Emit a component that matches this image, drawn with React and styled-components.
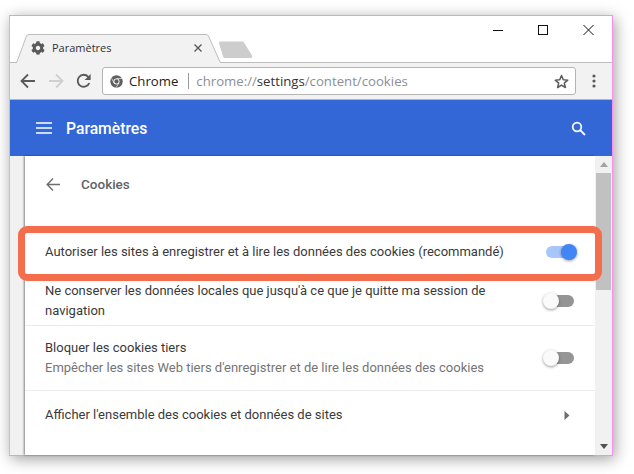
import styled, { createGlobalStyle } from 'styled-components'
import { FaCog } from 'react-icons/fa'

const GlobalStyle = createGlobalStyle`
  html, body {
    margin: 0;
    padding: 0;
    background: #fff;
    overflow: hidden;
  }
`

const Page = styled.div`
  width: 634px;
  height: 474px;
  box-sizing: border-box;
  padding: 15px 0 0 9px;
`

const Win = styled.div`
  position: relative;
  width: 604px;
  height: 441px;
  box-sizing: border-box;
  border: 1px solid #fb8cf0;
  border-left-color: #f4a0ee;
  background: #fff;
  display: flex;
  flex-direction: column;
  box-shadow: 2px 3px 14px rgba(0, 0, 0, 0.38);
  font-family: Roboto, sans-serif;
`

const TitleBar = styled.div`
  height: 47px;
  flex: none;
  display: flex;
  justify-content: space-between;
  box-sizing: border-box;
  border-bottom: 1px solid #bdbdbd;
`

const TabStrip = styled.div`
  display: flex;
  align-items: flex-start;
  padding: 18px 0 0 6px;
`

const Tab = styled.div`
  position: relative;
  width: 204px;
  height: 29px;
  display: flex;
  align-items: center;
  box-sizing: border-box;
  padding: 0 0 2px 15px;
  font-family: 'Open Sans', sans-serif;
  font-size: 11px;
  color: #333;
  z-index: 1;
`

const TabShape = styled.svg`
  position: absolute;
  left: 0;
  top: 0;
  z-index: -1;
`

const TabLabel = styled.span`
  margin-left: 7px;
  flex: 1;
`

const TabClose = styled.svg`
  margin-right: 18px;
`

const NewTab = styled.svg`
  margin: 7px 0 0 -2px;
`

const WinControls = styled.div`
  display: flex;
  align-items: flex-start;
  padding-top: 7px;
  padding-right: 18px;
  gap: 35px;
`

const ToolBar = styled.div`
  height: 37px;
  flex: none;
  display: flex;
  align-items: center;
  box-sizing: border-box;
  background: #f2f2f2;
  border-bottom: 1px solid #b5b5b5;
  padding: 0 0 0 10px;
`

const NavIcons = styled.div`
  display: flex;
  align-items: center;
  gap: 12px;
  margin-right: 10px;
`

const Omnibox = styled.div`
  width: 474px;
  height: 28px;
  box-sizing: border-box;
  background: #fff;
  border: 1px solid #b4b4b4;
  border-radius: 3px;
  display: flex;
  align-items: center;
  padding: 0 6px 0 7px;
  font-family: 'Open Sans', sans-serif;
  font-size: 13.2px;
`

const SiteName = styled.span`
  color: #222;
  margin-left: 6px;
`

const OmniDivider = styled.span`
  width: 1px;
  height: 16px;
  background: #9a9a9a;
  margin: 0 7px 0 10px;
`

const UrlText = styled.span`
  flex: 1;
  color: #8a8f96;
`

const UrlStrong = styled.span`
  color: #333;
`

const MenuDots = styled.svg`
  margin-left: 16px;
`

const BlueBar = styled.header`
  height: 56px;
  flex: none;
  background: #3367d6;
  display: flex;
  align-items: center;
  color: #fff;
  padding: 0 26px 0 26px;
`

const BarTitle = styled.h1`
  margin: 0 0 0 14px;
  flex: 1;
  font-size: 15.7px;
  font-weight: 500;
  font-family: Roboto, sans-serif;
`

const Body = styled.div`
  flex: 1;
  min-height: 0;
  display: flex;
  background: #f1f1f1;
  padding-left: 15px;
`

const Card = styled.main`
  width: 570px;
  flex: none;
  background: #fff;
  box-shadow: -1px 0 2px rgba(0, 0, 0, 0.45);
  display: flex;
  flex-direction: column;
`

const CardHead = styled.div`
  height: 77px;
  flex: none;
  display: flex;
  align-items: flex-start;
  padding: 21px 0 0 21px;
  box-sizing: border-box;
  font-size: 13.5px;
  font-weight: 500;
  color: #5f6368;
`

const CardTitle = styled.span`
  margin-left: 20px;
  line-height: 14px;
`

const Row = styled.div`
  height: ${p => p.$h}px;
  flex: none;
  box-sizing: border-box;
  display: flex;
  align-items: center;
  padding: ${p => p.$top || 0}px 20px 0 20px;
  border-bottom: ${p => (p.$line ? '1px solid #ececec' : 'none')};
`

const RowText = styled.div`
  flex: 1;
  padding-right: 20px;
  font-size: 13px;
  line-height: 20px;
  color: #3a3a3a;
`

const SubText = styled.div`
  color: #757575;
`

const Track = styled.div`
  position: relative;
  width: 28px;
  height: 12px;
  border-radius: 6px;
  background: ${p => (p.$on ? '#a9c6fa' : '#959595')};
  margin-right: 1px;
`

const Knob = styled.div`
  position: absolute;
  top: -2px;
  left: ${p => (p.$on ? '15px' : '-3px')};
  width: 16px;
  height: 16px;
  border-radius: 50%;
  background: ${p => (p.$on ? '#4285f4' : '#fafafa')};
  box-shadow: 0 1px 3px rgba(0, 0, 0, 0.4);
`

const RowArrow = styled.svg`
  margin-right: 5px;
`

const Scrollbar = styled.div`
  flex: 1;
  background: #f1f1f1;
  display: flex;
  flex-direction: column;
  align-items: center;
  padding: 0 1px;
`

const ScrollUp = styled.div`
  height: 17px;
  flex: none;
  display: flex;
  align-items: center;
  justify-content: center;
`

const ScrollThumb = styled.div`
  width: 100%;
  height: 117px;
  flex: none;
  background: #c1c1c1;
`

const ScrollDown = styled.div`
  margin-top: auto;
  height: 17px;
  display: flex;
  align-items: center;
  justify-content: center;
`

const Highlight = styled.div`
  position: absolute;
  left: 8px;
  top: 210px;
  width: 584px;
  height: 55px;
  box-sizing: border-box;
  border: 7px solid #f46e4e;
  border-radius: 9px;
  pointer-events: none;
`

const Toggle = ({ on }) => (
  <Track $on={on}>
    <Knob $on={on} />
  </Track>
)

const App = () => (
  <Page>
    <GlobalStyle />
    <Win>
      <TitleBar>
        <TabStrip>
          <Tab>
            <TabShape width="206" height="29" viewBox="0 0 206 29">
              <path d="M0.5 29 L10.5 2 Q11.2 0.5 13 0.5 L190 0.5 Q191.8 0.5 192.5 2 L204.5 29 Z" fill="#f2f2f2" stroke="#bdbdbd" />
              <path d="M1 29 L204 29" stroke="#f2f2f2" strokeWidth="2" />
            </TabShape>
            <FaCog size={14} color="#5a5a5a" />
            <TabLabel>Paramètres</TabLabel>
            <TabClose width="8" height="8" viewBox="0 0 8 8">
              <path d="M0.5 0.5 L7.5 7.5 M7.5 0.5 L0.5 7.5" stroke="#555" strokeWidth="1.3" />
            </TabClose>
          </Tab>
          <NewTab width="35" height="18" viewBox="0 0 35 18">
            <path d="M1 2 Q1 0.5 2.5 0.5 L24 0.5 Q25.5 0.5 26 1.5 L34 14.5 Q34.8 17 33 17 L7 17 Q5.5 17 5 15.5 Z" fill="#cdcdcd" />
          </NewTab>
        </TabStrip>
        <WinControls>
          <svg width="10" height="14" viewBox="0 0 10 14">
            <path d="M0 7.5 L10 7.5" stroke="#111" strokeWidth="1" />
          </svg>
          <svg width="10" height="14" viewBox="0 0 10 14">
            <rect x="0.5" y="2.5" width="9" height="9" fill="none" stroke="#111" />
          </svg>
          <svg width="11" height="14" viewBox="0 0 11 14">
            <path d="M0.5 2 L10.5 12 M10.5 2 L0.5 12" stroke="#111" strokeWidth="1" />
          </svg>
        </WinControls>
      </TitleBar>

      <ToolBar>
        <NavIcons>
          <svg width="16" height="16" viewBox="0 0 16 16">
            <path d="M15 8 L2 8 M8 1.5 L1.5 8 L8 14.5" fill="none" stroke="#5a5a5a" strokeWidth="1.8" />
          </svg>
          <svg width="16" height="16" viewBox="0 0 16 16">
            <path d="M1 8 L14 8 M8 1.5 L14.5 8 L8 14.5" fill="none" stroke="#cfcfcf" strokeWidth="1.8" />
          </svg>
          <svg width="16" height="16" viewBox="0 0 16 16">
            <path d="M13.3 10 A6 6 0 1 1 12.2 3.8" fill="none" stroke="#5a5a5a" strokeWidth="1.9" />
            <path d="M14.6 1 L14.6 7 L8.6 7 Z" fill="#5a5a5a" />
          </svg>
        </NavIcons>
        <Omnibox>
          <svg width="13" height="13" viewBox="0 0 24 24">
            <circle cx="12" cy="12" r="11.5" fill="#5f5f5f" />
            <circle cx="12" cy="12" r="5.6" fill="#fff" />
            <circle cx="12" cy="12" r="4" fill="#5f5f5f" />
            <path d="M12 6.4 L22.5 6.4 M8 16 L3 6 M16.5 15 L11 23.5" stroke="#fff" strokeWidth="1.2" />
          </svg>
          <SiteName>Chrome</SiteName>
          <OmniDivider />
          <UrlText>
            chrome://<UrlStrong>settings</UrlStrong>/content/cookies
          </UrlText>
          <svg width="15" height="15" viewBox="0 0 24 24">
            <path d="M12 2.5 L14.8 9.2 L22 9.8 L16.5 14.5 L18.2 21.6 L12 17.8 L5.8 21.6 L7.5 14.5 L2 9.8 L9.2 9.2 Z" fill="none" stroke="#5a5a5a" strokeWidth="2.4" strokeLinejoin="round" />
          </svg>
        </Omnibox>
        <MenuDots width="4" height="14" viewBox="0 0 4 14">
          <circle cx="2" cy="2" r="1.6" fill="#5a5a5a" />
          <circle cx="2" cy="7" r="1.6" fill="#5a5a5a" />
          <circle cx="2" cy="12" r="1.6" fill="#5a5a5a" />
        </MenuDots>
      </ToolBar>

      <BlueBar>
        <svg width="16" height="12" viewBox="0 0 16 12">
          <path d="M0 1 H16 M0 6 H16 M0 11 H16" stroke="#fff" strokeWidth="1.6" />
        </svg>
        <BarTitle>Paramètres</BarTitle>
        <svg width="15" height="15" viewBox="0 0 15 15">
          <circle cx="6" cy="6" r="4.3" fill="none" stroke="#fff" strokeWidth="1.7" />
          <path d="M9.2 9.2 L14 14" stroke="#fff" strokeWidth="1.9" />
        </svg>
      </BlueBar>

      <Body>
        <Card>
          <CardHead>
            <svg width="15" height="15" viewBox="0 0 15 15">
              <path d="M14 7.5 L1.5 7.5 M7 1.5 L1.2 7.5 L7 13.5" fill="none" stroke="#6e6e6e" strokeWidth="1.4" />
            </svg>
            <CardTitle>Cookies</CardTitle>
          </CardHead>
          <Row $h={38}>
            <RowText>Autoriser les sites à enregistrer et à lire les données des cookies (recommandé)</RowText>
            <Toggle on />
          </Row>
          <Row $h={55} $top={6} $line>
            <RowText>Ne conserver les données locales que jusqu'à ce que je quitte ma session de navigation</RowText>
            <Toggle />
          </Row>
          <Row $h={65} $line>
            <RowText>
              Bloquer les cookies tiers
              <SubText>Empêcher les sites Web tiers d'enregistrer et de lire les données des cookies</SubText>
            </RowText>
            <Toggle />
          </Row>
          <Row $h={48}>
            <RowText>Afficher l'ensemble des cookies et données de sites</RowText>
            <RowArrow width="6" height="9" viewBox="0 0 6 9">
              <path d="M0.5 0 L5.5 4.5 L0.5 9 Z" fill="#6e6e6e" />
            </RowArrow>
          </Row>
        </Card>
        <Scrollbar>
          <ScrollUp>
            <svg width="8" height="5" viewBox="0 0 8 5">
              <path d="M0 5 L4 0 L8 5 Z" fill="#a3a3a3" />
            </svg>
          </ScrollUp>
          <ScrollThumb />
          <ScrollDown>
            <svg width="8" height="5" viewBox="0 0 8 5">
              <path d="M0 0 L4 5 L8 0 Z" fill="#505050" />
            </svg>
          </ScrollDown>
        </Scrollbar>
      </Body>
      <Highlight />
    </Win>
  </Page>
)

export default App
